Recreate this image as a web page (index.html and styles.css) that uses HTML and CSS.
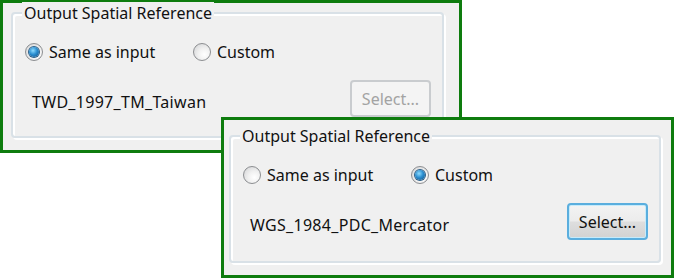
FILE: index.html
```html
<!DOCTYPE html>
<html lang="en">
<head>
  <meta charset="UTF-8">
  <title>Output Spatial Reference</title>
  <link rel="stylesheet" href="styles.css">
</head>
<body>
  <div class="canvas">
    <div class="win win-a">
      <div class="group">
        <span class="legend">Output Spatial Reference</span>
        <div class="radios">
          <label class="opt"><span class="radio checked"></span>Same as input</label>
          <label class="opt"><span class="radio"></span>Custom</label>
        </div>
        <div class="ref-row">
          <span class="ref-name">TWD_1997_TM_Taiwan</span>
          <button class="btn" disabled>Select...</button>
        </div>
      </div>
    </div>

    <div class="win win-b">
      <div class="group">
        <span class="legend">Output Spatial Reference</span>
        <div class="radios">
          <label class="opt"><span class="radio"></span>Same as input</label>
          <label class="opt"><span class="radio checked"></span>Custom</label>
        </div>
        <div class="ref-row">
          <span class="ref-name">WGS_1984_PDC_Mercator</span>
          <button class="btn btn-focus">Select...</button>
        </div>
      </div>
    </div>
  </div>
</body>
</html>
```

FILE: styles.css
```css
body {
  margin: 0;
  background: #fff;
  font-family: "Noto Sans", "Open Sans", sans-serif;
  font-size: 16px;
  color: #111;
}
.canvas { position: relative; width: 674px; height: 278px; overflow: hidden; }

/* two cropped dialog snapshots, framed in green */
.win {
  position: absolute;
  box-sizing: border-box;
  border: 3px solid #0e7c0e;
  background: #f0f0f0;
  display: flex;
}
.win-a { left: 0; top: 0; width: 462px; height: 153px; padding: 9px 15px 12px 8px; }
.win-b { left: 221px; top: 117px; width: 453px; height: 161px; padding: 15px 10px 12px 5px; }

.group {
  position: relative;
  flex: 1;
  border: 2px solid #d9e1e7;
  border-radius: 4px;
  box-shadow: inset 2px 2px 0 #fff, 2px 2px 0 #fff;
  padding: 27px 11px 0 12px;
}
.legend {
  position: absolute;
  top: -12px; left: 9px;
  padding: 0 2px;
  line-height: 22px;
  background: #f0f0f0;
  white-space: nowrap;
}

.radios { display: grid; grid-template-columns: 168px auto; height: 20px; }
.opt { display: flex; align-items: center; gap: 6px; white-space: nowrap; }
.radio {
  position: relative;
  width: 18px; height: 18px;
  box-sizing: border-box;
  border-radius: 50%;
  border: 1px solid #8c8e91;
  background: radial-gradient(circle at 65% 65%, #ffffff 0%, #f1f1f1 40%, #cfd0d2 100%);
}
.radio.checked::after {
  content: "";
  position: absolute;
  left: 3px; top: 3px;
  width: 10px; height: 10px;
  border-radius: 50%;
  background: radial-gradient(circle at 40% 35%, #8fdcff 0%, #2c8fd0 45%, #0d4c84 100%);
  box-shadow: 0 0 0 1px #2b5f88;
}

.ref-row {
  display: flex;
  justify-content: space-between;
  align-items: flex-start;
  margin-top: 19px;
}
.ref-name { padding: 12px 0 0 7px; line-height: 20px; letter-spacing: 0.3px; }

.btn {
  width: 81px; height: 37px;
  box-sizing: border-box;
  font: inherit;
  color: #111;
  border-radius: 4px;
  padding: 0;
}
.btn:disabled {
  color: #a3a3a3;
  border: 2px solid #c9cccf;
  background: #f4f4f4;
}
.btn-focus {
  border: 2px solid #5aaede;
  box-shadow: inset 0 0 0 1px #c6ebfb;
  background: linear-gradient(#f3f3f3 0%, #ececec 48%, #dedede 52%, #d2d2d2 100%);
}
```
